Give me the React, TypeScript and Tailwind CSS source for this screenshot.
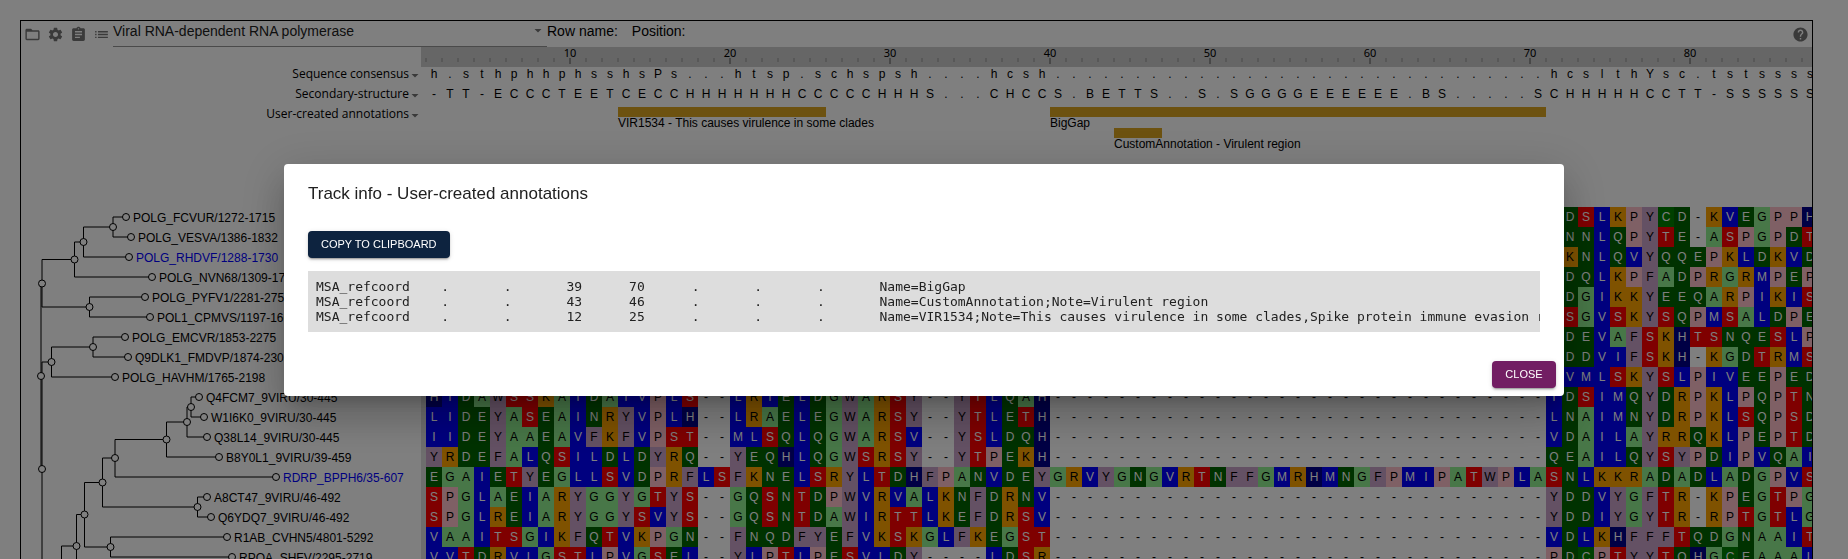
import React from "react";
import { MdAssignment, MdFolderOpen, MdHelp, MdList, MdSettings } from "react-icons/md";

const CELL = 16;
const COLUMNS = 87;

const LIGHT_GREEN = "bg-[#90ee90] text-black";
const DARK_GREEN = "bg-[#006400] text-white";
const BLUE = "bg-[#0000ff] text-white";
const LILAC = "bg-[#c8a2c8] text-black";
const ORANGE = "bg-[#ffa500] text-black";
const RED = "bg-[#ff0000] text-white";

const residueClass: Record<string, string> = {
  A: LIGHT_GREEN,
  G: LIGHT_GREEN,
  C: "bg-[#008000] text-white",
  D: DARK_GREEN,
  E: DARK_GREEN,
  N: DARK_GREEN,
  Q: DARK_GREEN,
  I: BLUE,
  L: BLUE,
  M: BLUE,
  V: BLUE,
  F: LILAC,
  W: LILAC,
  Y: LILAC,
  H: "bg-[#00008b] text-white",
  K: ORANGE,
  R: ORANGE,
  P: "bg-[#ffc0cb] text-black",
  S: RED,
  T: RED,
};

const gap = (n: number) => "-".repeat(n);
const dots = (n: number) => ".".repeat(n);

const sequences = [
  gap(71) + "DSLKPYCD-KVEGPPH",
  gap(71) + "NNLQPYTE-ASPGPDT",
  gap(71) + "KNLQVYQQEPKLDKVD",
  gap(71) + "DQLKPFADPRGRMPEP",
  gap(71) + "DGIKKYEEQARPIKIS",
  gap(71) + "SGVSKYSQPMSALDPE",
  gap(71) + "DEVAFSKHTSNQESLP",
  gap(71) + "DDVIFSKH-KGDTRMS",
  gap(71) + "VMLSKYSLPIVEEPED",
  "HIDAWSSKAIDAIVPLS--LRIELDGWARSY--YTLQAH" + gap(31) + "IDSIMQYDRPKLPQPTN",
  "LIDEYASEAINRYVPLH--LRAELEGWARSY--YTLETH" + gap(31) + "LNAIMNYDRPKLSQPSD",
  "IIDEYAAEAVFKFVPST--MLSQLQGWARSV--YSLDQH" + gap(31) + "VDAILAYRRQKLPEPTD",
  "YRDEFALQSILDLDYRQ--YEQHLQGWSRSY--YTPEKH" + gap(31) + "QEAILQYSYPDIPVQAI",
  "EGAIETYEGLLSVDPRFLSFKNELSRYLTDHFPANVDEYGRVYGNGVRTNFFGMRHMNGFPMIPATWPLASNLKKRADADLADGPVS",
  "SPGLAEIARYGGYGTYS--GQSNTDPWVRVALKNFDRNV" + gap(31) + "YDDVYGFTR-KPEGTPG",
  "SPGLREIARYGGYSVYS--GQSNTDAWIRTTLKEFDRSV" + gap(31) + "YDDIYGYTR-RPTGTLG",
  "VAAITSGIKFQTVKPGN--FNQDFYEFVKSKGLFKEGST" + gap(31) + "VDLKHFFFTQDGNAAIT",
  "VVTDRVLGSTLPVGSEL--YLPTLPESVLDY----LDSR" + gap(31) + "PDCPTYYTQHGCEAAAL",
];

const consensus =
  "h.sthphhphsshsPs...htsp.schspsh" + dots(4) + "hcsh" + dots(31) + "hcslthYsc.tstssss";
const secondary =
  "-TT-ECCCTEETCECCHHHHHHHCCCCCHHHS...CHCCS.BETTS..S.SGGGGEEEEEE.BS.....SCHHHHHCCTT-SSSSSS";

const leaves: { name: string; x: number; y: number; highlight?: boolean }[] = [
  { name: "POLG_FCVUR/1272-1715", x: 126, y: 217 },
  { name: "POLG_VESVA/1386-1832", x: 131, y: 237 },
  { name: "POLG_RHDVF/1288-1730", x: 129, y: 257, highlight: true },
  { name: "POLG_NVN68/1309-1710", x: 152, y: 277 },
  { name: "POLG_PYFV1/2281-2750", x: 145, y: 297 },
  { name: "POL1_CPMVS/1197-1660", x: 150, y: 317 },
  { name: "POLG_EMCVR/1853-2275", x: 125, y: 337 },
  { name: "Q9DLK1_FMDVP/1874-2303", x: 128, y: 357 },
  { name: "POLG_HAVHM/1765-2198", x: 115, y: 377 },
  { name: "Q4FCM7_9VIRU/30-445", x: 199, y: 397 },
  { name: "W1I6K0_9VIRU/30-445", x: 204, y: 417 },
  { name: "Q38L14_9VIRU/30-445", x: 207, y: 437 },
  { name: "B8Y0L1_9VIRU/39-459", x: 219, y: 457 },
  { name: "RDRP_BPPH6/35-607", x: 276, y: 477, highlight: true },
  { name: "A8CT47_9VIRU/46-492", x: 207, y: 497 },
  { name: "Q6YDQ7_9VIRU/46-492", x: 211, y: 517 },
  { name: "R1AB_CVHN5/4801-5292", x: 227, y: 537 },
  { name: "RPOA_SHFV/2295-2719", x: 232, y: 557 },
];

type Point = [number, number];

/* Each branch point with the two child nodes that it joins. */
const branches: { at: Point; children: [Point, Point] }[] = [
  { at: [113, 227], children: [[126, 217], [131, 237]] },
  { at: [83.5, 242], children: [[113, 227], [129, 257]] },
  { at: [74.5, 259.5], children: [[83.5, 242], [152, 277]] },
  { at: [89.5, 307], children: [[145, 297], [150, 317]] },
  { at: [42, 283.5], children: [[74.5, 259.5], [89.5, 307]] },
  { at: [93, 347], children: [[125, 337], [128, 357]] },
  { at: [51.5, 362], children: [[93, 347], [115, 377]] },
  { at: [41, 376], children: [[42, 283.5], [42, 469]] },
  { at: [42, 469], children: [[51.5, 362], [61.5, 576]] },
  { at: [191, 407], children: [[199, 397], [204, 417]] },
  { at: [187, 422], children: [[191, 407], [207, 437]] },
  { at: [166.5, 439.5], children: [[187, 422], [219, 457]] },
  { at: [115, 458], children: [[166.5, 439.5], [276, 477]] },
  { at: [197.5, 507], children: [[207, 497], [211, 517]] },
  { at: [102.5, 482.5], children: [[115, 458], [197.5, 507]] },
  { at: [110.5, 547], children: [[227, 537], [232, 557]] },
  { at: [84.5, 514.5], children: [[102.5, 482.5], [110.5, 547]] },
  { at: [76.5, 546], children: [[84.5, 514.5], [100, 577]] },
  { at: [61.5, 576], children: [[76.5, 546], [80, 606]] },
];

const features = [
  [
    { label: "VIR1534 - This causes virulence in some clades", start: 13, end: 26 },
    { label: "BigGap", start: 40, end: 71 },
  ],
  [{ label: "CustomAnnotation - Virulent region", start: 44, end: 47 }],
];

const gff = [
  "MSA_refcoord\t.\t.\t39\t70\t.\t.\t.\tName=BigGap",
  "MSA_refcoord\t.\t.\t43\t46\t.\t.\t.\tName=CustomAnnotation;Note=Virulent region",
  "MSA_refcoord\t.\t.\t12\t25\t.\t.\t.\tName=VIR1534;Note=This causes virulence in some clades,Spike protein immune evasion r",
].join("\n");

function Caret() {
  return (
    <svg width="8" height="4" viewBox="0 0 8 4" fill="#757575" aria-hidden="true">
      <path d="M0.5 0h7L4 3.5z" />
    </svg>
  );
}

function IconButton({ label, children }: { label: string; children: React.ReactNode }) {
  return (
    <button type="button" aria-label={label} className="shrink-0 p-[3px] text-[17px] text-[#757575]">
      {children}
    </button>
  );
}

function Header() {
  return (
    <header className="flex h-[26px] items-stretch text-sm">
      <div className="flex items-end pb-px">
        <IconButton label="Open files">
          <MdFolderOpen />
        </IconButton>
        <IconButton label="Settings">
          <MdSettings />
        </IconButton>
        <IconButton label="Metadata">
          <MdAssignment />
        </IconButton>
        <IconButton label="Tracks">
          <MdList />
        </IconButton>
      </div>
      <div className="relative w-[434px] shrink-0">
        <select
          aria-label="Alignment"
          className="h-full w-full appearance-none border-b border-[#949494] pb-[5px] leading-5 text-[#212121]"
        >
          <option>Viral RNA-dependent RNA polymerase</option>
        </select>
        <span className="pointer-events-none absolute top-2 right-[5px] flex">
          <Caret />
        </span>
      </div>
      <p className="flex gap-3.5 leading-5 whitespace-nowrap text-black">
        <span>Row name:</span>
        <span>Position:</span>
      </p>
      <div className="ml-auto flex items-end pb-px">
        <IconButton label="Help">
          <MdHelp />
        </IconButton>
      </div>
    </header>
  );
}

function Ruler() {
  const ticks = Array.from({ length: COLUMNS }, (_, i) => i);
  return (
    <div className="flex">
      <div className="w-[400px] shrink-0" />
      <div className="min-w-0 flex-1 overflow-x-clip bg-[#cccccc] pl-[5px]">
        <svg width={COLUMNS * CELL} height="20" className="block max-w-none overflow-visible">
          {ticks.map((i) => {
            const major = i > 0 && (i + 1) % 10 === 0;
            return (
              <rect
                key={i}
                x={i * CELL - 1}
                y="11"
                width="2"
                height={major ? 6 : 4}
                fill={major ? "#909090" : "#b0b0b0"}
              />
            );
          })}
          {ticks
            .filter((i) => (i + 1) % 10 === 0)
            .map((i) => (
              <text
                key={i}
                x={i * CELL}
                y="10"
                textAnchor="middle"
                className="fill-black font-['Noto_Sans',sans-serif] text-[11px]"
              >
                {i + 1}
              </text>
            ))}
        </svg>
      </div>
    </div>
  );
}

function Track({ name, children }: { name: string; children: React.ReactNode }) {
  return (
    <div className="flex">
      <button
        type="button"
        className="flex h-5 w-[400px] shrink-0 items-start justify-end gap-[2px] pr-[2px] font-['Open_Sans',sans-serif] text-xs leading-[14px] text-black"
      >
        {name}
        <span className="pt-[7px]">
          <Caret />
        </span>
      </button>
      <div className="min-w-0 flex-1 overflow-hidden pl-[5px]">{children}</div>
    </div>
  );
}

function TextTrack({ letters }: { letters: string }) {
  return (
    <div className="flex h-5 text-xs leading-[14px] text-black">
      {letters.split("").map((letter, i) => (
        <span key={i} className="w-4 shrink-0 text-center">
          {letter}
        </span>
      ))}
    </div>
  );
}

function FeatureTrack() {
  return (
    <div className="h-[100px]">
      {features.map((row, i) => (
        <div key={i} className="grid h-[21px] grid-cols-[repeat(87,16px)]">
          {row.map((f) => (
            <div key={f.label} style={{ gridColumn: `${f.start} / ${f.end}`, gridRow: 1 }}>
              <div className="h-[10px] bg-[#daa520]" />
              <p className="text-xs leading-[13px] whitespace-nowrap text-black">{f.label}</p>
            </div>
          ))}
        </div>
      ))}
    </div>
  );
}

function Tree() {
  return (
    <svg width="400" height="360" viewBox="21 207 400 360" className="block shrink-0">
      <g fill="none" stroke="#000" strokeWidth="1">
        {branches.map(({ at: [x, y], children: [a, b] }) => (
          <path key={`${x}-${y}`} d={`M${a[0]} ${a[1]}H${x}V${b[1]}H${b[0]}`} />
        ))}
      </g>
      <g fill="#fff" stroke="#000" strokeWidth="1">
        {branches.map(({ at: [x, y] }) => (
          <circle key={`${x}-${y}`} cx={x} cy={y} r="3.5" />
        ))}
        {leaves.map((leaf) => (
          <circle key={leaf.name} cx={leaf.x} cy={leaf.y} r="3.5" />
        ))}
      </g>
      {leaves.map((leaf) => (
        <text
          key={leaf.name}
          x={leaf.x + 7}
          y={leaf.y + 5}
          fill={leaf.highlight ? "#0000ff" : "#000000"}
          className="text-xs"
        >
          {leaf.name}
        </text>
      ))}
    </svg>
  );
}

function Alignment() {
  return (
    <div className="min-w-0 flex-1 overflow-hidden text-xs leading-5">
      {sequences.map((sequence, row) => (
        <div key={row} className="flex">
          {sequence.split("").map((residue, i) => (
            <span
              key={i}
              className={`h-5 w-4 shrink-0 text-center ${residueClass[residue] ?? "text-black"}`}
            >
              {residue}
            </span>
          ))}
        </div>
      ))}
    </div>
  );
}

function TrackInfoDialog() {
  const button =
    "h-[27px] rounded text-[11px] uppercase text-white shadow-[0px_3px_1px_-2px_rgba(0,0,0,0.2),0px_2px_2px_0px_rgba(0,0,0,0.14),0px_1px_5px_0px_rgba(0,0,0,0.12)]";
  return (
    <div className="fixed inset-0 flex items-center justify-center bg-black/50 p-8">
      <div
        role="dialog"
        aria-modal="true"
        aria-labelledby="track-info-title"
        className="w-full max-w-[1280px] rounded bg-white text-[#212121] shadow-[0px_11px_15px_-7px_rgba(0,0,0,0.2),0px_24px_38px_3px_rgba(0,0,0,0.14),0px_9px_46px_8px_rgba(0,0,0,0.12)]"
      >
        <h2 id="track-info-title" className="px-6 py-4 text-[17px] leading-[27px]">
          Track info - User-created annotations
        </h2>
        <div className="px-6 pt-2 pb-[29px]">
          <button type="button" className={`block bg-[#0d233f] px-[13px] ${button}`}>
            Copy to clipboard
          </button>
          <pre className="mt-[13px] overflow-hidden bg-[#dddddd] py-2 pl-2 font-['DejaVu_Sans_Mono',monospace] text-[13px] leading-[15px] [tab-size:8]">
            {gff}
          </pre>
        </div>
        <div className="flex justify-end px-2 pb-2">
          <button type="button" className={`min-w-16 bg-[#721e63] px-[10px] ${button}`}>
            Close
          </button>
        </div>
      </div>
    </div>
  );
}

export default function App() {
  return (
    <div className="h-screen overflow-hidden bg-white pt-5 pr-[35px] pl-5 font-['Liberation_Sans',Arial,sans-serif]">
      <main className="border border-black">
        <Header />
        <Ruler />
        <Track name="Sequence consensus">
          <TextTrack letters={consensus} />
        </Track>
        <Track name="Secondary-structure">
          <TextTrack letters={secondary} />
        </Track>
        <Track name="User-created annotations">
          <FeatureTrack />
        </Track>
        <div className="flex">
          <Tree />
          <div className="w-[5px] shrink-0 bg-[#dddddd]" />
          <Alignment />
        </div>
      </main>
      <TrackInfoDialog />
    </div>
  );
}
